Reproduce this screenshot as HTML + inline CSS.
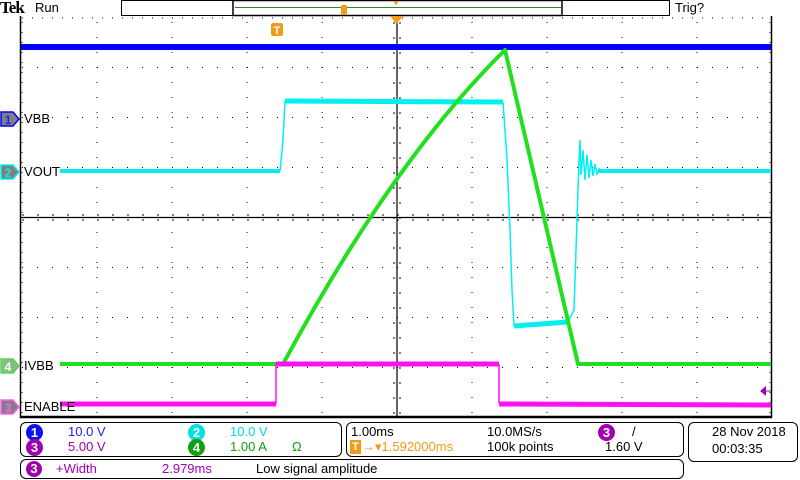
<!DOCTYPE html>
<html><head><meta charset="utf-8"><style>
html,body{margin:0;padding:0;background:#fff;width:800px;height:480px;overflow:hidden;font-family:"Liberation Sans",sans-serif;}
.t{position:absolute;font-size:13px;line-height:14px;white-space:nowrap;}
.box{position:absolute;border:1px solid #000;border-radius:6px;box-sizing:border-box;}
.c{position:absolute;width:17px;height:17px;border-radius:50%;color:#fff;font-size:13px;line-height:17px;text-align:center;font-weight:bold;}
</style></head><body>
<svg width="800" height="480" style="position:absolute;left:0;top:0" xmlns="http://www.w3.org/2000/svg">
<rect x="121.5" y="0.5" width="548" height="15" fill="#fff" stroke="#000"/>
<rect x="233" y="0.5" width="329" height="15" fill="#fff" stroke="#000" stroke-width="1.5"/>
<line x1="235" y1="7.5" x2="561" y2="7.5" stroke="#209020" stroke-width="1"/>
<rect x="341" y="5" width="6" height="10" rx="1" fill="#f39a18"/>
<path d="M393 1 L399 1 L396 5 Z" fill="#f39a18"/>
<line x1="20.5" y1="16" x2="20.5" y2="418" stroke="#000" stroke-width="1.5"/>
<line x1="771.5" y1="16" x2="771.5" y2="418" stroke="#000" stroke-width="1.5"/>
<line x1="20" y1="417" x2="772" y2="417" stroke="#000" stroke-width="2.5"/>
<g stroke="#000" stroke-width="1" stroke-dasharray="1 14">
<line x1="97" y1="22" x2="97" y2="416"/><line x1="172" y1="22" x2="172" y2="416"/><line x1="247" y1="22" x2="247" y2="416"/><line x1="322" y1="22" x2="322" y2="416"/><line x1="472" y1="22" x2="472" y2="416"/><line x1="547" y1="22" x2="547" y2="416"/><line x1="622" y1="22" x2="622" y2="416"/><line x1="697" y1="22" x2="697" y2="416"/>
</g>
<g stroke="#000" stroke-width="1" stroke-dasharray="1 14">
<line x1="22" y1="67.5" x2="771" y2="67.5"/><line x1="22" y1="117.5" x2="771" y2="117.5"/><line x1="22" y1="167.5" x2="771" y2="167.5"/><line x1="22" y1="267.5" x2="771" y2="267.5"/><line x1="22" y1="317.5" x2="771" y2="317.5"/><line x1="22" y1="367.5" x2="771" y2="367.5"/>
</g>
<g stroke="#000" stroke-dasharray="1 9"><line x1="22" y1="22" x2="22" y2="416"/><line x1="770" y1="22" x2="770" y2="416"/><line x1="22" y1="18" x2="771" y2="18"/></g>
<line x1="397" y1="16" x2="397" y2="416" stroke="#000" stroke-width="1.2"/>
<line x1="20" y1="217.5" x2="771" y2="217.5" stroke="#000" stroke-width="1.2"/>
<g stroke="#000" stroke-dasharray="2 13"><line x1="22" y1="220" x2="771" y2="220"/><line x1="22" y1="215" x2="771" y2="215"/><line x1="394" y1="22" x2="394" y2="416"/><line x1="400" y1="22" x2="400" y2="416"/></g>
<path d="M390 16 L403 16 L396.5 24 Z" fill="#f39a18"/>
<rect x="271" y="23" width="12" height="13" rx="2" fill="#f39a18"/>
<text x="277" y="34" font-size="11" font-weight="bold" fill="#fff" text-anchor="middle" font-family="Liberation Sans">T</text>
<rect x="21" y="44" width="750" height="6" fill="#0000ff"/>
<polyline fill="none" stroke="#00f0f0" stroke-width="4" points="60,171 280,171"/>
<polyline fill="none" stroke="#00f0f0" stroke-width="1.5" points="280,171 283,140 285,101"/>
<polyline fill="none" stroke="#00f0f0" stroke-width="5" points="285,101 503,102"/>
<polyline fill="none" stroke="#00f0f0" stroke-width="1.5" points="503,102 505,130 507,160 510,230 512,290 514,326"/>
<polyline fill="none" stroke="#00f0f0" stroke-width="5" points="514,326 568,322"/>
<polyline fill="none" stroke="#00f0f0" stroke-width="1.5" points="568,322 574,310 577,220 579,160 580,140 581,175 583,150 585,180 587,155 589,178 591,160 593,176 595,164 597,174 600,168"/>
<polyline fill="none" stroke="#00f0f0" stroke-width="4" points="598,171 771,171"/>
<path fill="none" stroke="#20e020" stroke-width="4" stroke-linejoin="round" d="M60,364 L283,364 Q394,159 505,50 L578,364 L771,364"/>
<polyline fill="none" stroke="#ff10f0" stroke-width="5" points="60,404 276,404"/>
<polyline fill="none" stroke="#ff10f0" stroke-width="1.5" points="276,404 276,363"/>
<polyline fill="none" stroke="#ff10f0" stroke-width="5" points="276,364 499,364"/>
<polyline fill="none" stroke="#ff10f0" stroke-width="1.5" points="499,364 499,403"/>
<polyline fill="none" stroke="#ff10f0" stroke-width="5" points="499,404 771,405"/>
<path d="M760 391 L766 386 L766 396 Z" fill="#a000c0"/><line x1="764" y1="391" x2="771" y2="391" stroke="#a000c0"/>
<g font-family="Liberation Sans" font-size="12" font-weight="bold" fill="#fff" text-anchor="middle">
<path d="M1 112 L13 112 L19 119 L13 126 L1 126 Z" fill="#808080" stroke="#0000ff" stroke-width="1.5"/><text x="8" y="124" fill="#2020ff">1</text>
<path d="M1 165 L13 165 L19 172 L13 179 L1 179 Z" fill="#808080" stroke="#00f0f0" stroke-width="1.5"/><text x="8" y="177" fill="#00f0f0">2</text>
<path d="M1 359 L13 359 L19 366 L13 373 L1 373 Z" fill="#80c080" stroke="#60d060" stroke-width="1.5"/><text x="8" y="371" fill="#fff">4</text>
<path d="M1 400 L13 400 L19 407 L13 414 L1 414 Z" fill="#808080" stroke="#ff60f0" stroke-width="1.5"/><text x="8" y="412" fill="#ff60f0">3</text>
</g>
</svg>
<div class="t" style="left:0;top:-1px;font-family:'Liberation Serif',serif;font-weight:bold;font-size:17px;line-height:17px;letter-spacing:-1px">Tek</div>
<div class="t" style="left:35px;top:1px">Run</div>
<div class="t" style="left:675px;top:1px">Trig?</div>
<div class="t" style="left:24px;top:112px">VBB</div>
<div class="t" style="left:24px;top:165px">VOUT</div>
<div class="t" style="left:24px;top:359px">IVBB</div>
<div class="t" style="left:24px;top:400px">ENABLE</div>

<div class="box" style="left:20px;top:422px;width:322px;height:35px"></div>
<div class="box" style="left:346px;top:422px;width:338px;height:35px"></div>
<div class="box" style="left:688px;top:422px;width:110px;height:40px"></div>
<div class="box" style="left:20px;top:459px;width:664px;height:20px"></div>

<div class="c" style="left:26px;top:424px;background:#1010f0">1</div>
<div class="t" style="left:68px;top:425px;color:#2020f0">10.0 V</div>
<div class="c" style="left:188px;top:424px;background:#00e0e0">2</div>
<div class="t" style="left:230px;top:425px;color:#00d8e8">10.0 V</div>
<div class="c" style="left:26px;top:439px;background:#a000b0">3</div>
<div class="t" style="left:68px;top:440px;color:#a000b0">5.00 V</div>
<div class="c" style="left:188px;top:439px;background:#10a010">4</div>
<div class="t" style="left:230px;top:440px;color:#10a010">1.00 A</div>
<div class="t" style="left:292px;top:440px;color:#10a010">Ω</div>

<div class="t" style="left:351px;top:425px">1.00ms</div>
<div class="t" style="left:487px;top:425px">10.0MS/s</div>
<div class="c" style="left:598px;top:424px;background:#a000b0">3</div>
<div class="t" style="left:632px;top:425px">/</div>
<div style="position:absolute;left:350px;top:440px;width:11px;height:14px;background:#f39a18;color:#fff;font-size:11px;font-weight:bold;text-align:center;line-height:14px">T</div>
<div class="t" style="left:362px;top:440px;color:#f39a18;font-size:13px">→▾1.592000ms</div>
<div class="t" style="left:487px;top:440px">100k points</div>
<div class="t" style="left:605px;top:440px">1.60 V</div>

<div class="t" style="left:712px;top:425px">28 Nov 2018</div>
<div class="t" style="left:712px;top:442px">00:03:35</div>

<div class="c" style="left:26px;top:461px;width:16px;height:16px;line-height:16px;background:#a000b0">3</div>
<div class="t" style="left:56px;top:462px;color:#a000b0">+Width</div>
<div class="t" style="left:162px;top:462px;color:#a000b0">2.979ms</div>
<div class="t" style="left:256px;top:462px">Low signal amplitude</div>
</body></html>
